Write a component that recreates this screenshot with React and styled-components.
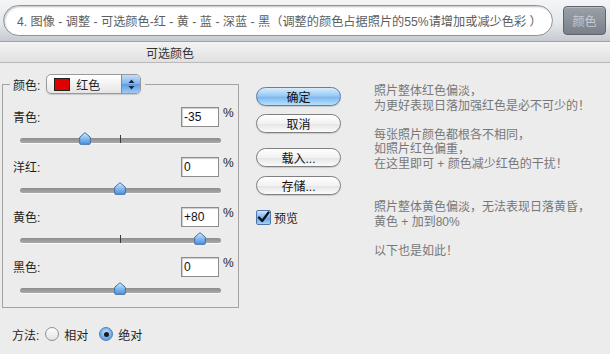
import React from "react";
import styled, { createGlobalStyle } from "styled-components";

const Global = createGlobalStyle`
  html, body { margin: 0; padding: 0; background: #ececec; }
  body { width: 610px; height: 354px; overflow: hidden; font-family: "Liberation Sans", "Noto Sans CJK SC", sans-serif; }
  * { box-sizing: border-box; }
`;

const Page = styled.div`
  width: 610px;
  height: 354px;
  background: #ececec;
  display: flex;
  flex-direction: column;
  color: #1e1e1e;
  font-size: 12px;
`;

const TopBar = styled.div`
  height: 42px;
  display: flex;
  align-items: center;
  padding: 0 4px 0 3px;
  gap: 10px;
  background: linear-gradient(#f4f5f7 0%, #e6e8ec 55%, #c6cad1 100%);
  border-bottom: 1px solid #9ea2a8;
`;

const Pill = styled.div`
  width: 550px;
  height: 31px;
  border-radius: 16px;
  background: #fff;
  border: 1px solid #8f949a;
  box-shadow: inset 1px 1px 2px rgba(0, 0, 0, 0.25);
  display: flex;
  align-items: center;
  padding-left: 13px;
  font-size: 12.2px;
  color: #5e5e5e;
  white-space: nowrap;
  overflow: hidden;
`;

const DarkButton = styled.div`
  width: 43px;
  height: 29px;
  border-radius: 4px;
  border: 1px solid #5f646b;
  background: linear-gradient(#9ba0a8, #7a8089);
  color: #c7cbd1;
  font-size: 12px;
  display: flex;
  align-items: center;
  justify-content: center;
  box-shadow: inset 0 1px 0 rgba(255, 255, 255, 0.3);
`;

const TitleBand = styled.div`
  height: 21px;
  display: flex;
  align-items: center;
  padding-left: 146px;
  background: linear-gradient(#f3f3f3, #e1e1e1);
  border-bottom: 1px solid #b9b9b9;
  font-size: 12px;
  color: #333;
`;

const Main = styled.div`
  display: flex;
  align-items: flex-start;
`;

const LeftCol = styled.div`
  width: 240px;
  padding-left: 2px;
  display: flex;
  flex-direction: column;
`;

const Fieldset = styled.fieldset`
  margin: 11px 0 0 0;
  padding: 0;
  width: 237px;
  border: 1px solid #a3a3a3;
  min-width: 0;
`;

const Legend = styled.legend`
  margin-left: 7px;
  padding: 0 4px 0 3px;
  display: flex;
  align-items: center;
  gap: 6px;
  height: 20px;
`;

const Label = styled.span`
  font-size: 12px;
  color: #1e1e1e;
`;

const Select = styled.div`
  width: 95px;
  height: 20px;
  border-radius: 5px;
  border: 1px solid #9a9a9a;
  background: linear-gradient(#ffffff, #f0f0f0 60%, #e4e4e4);
  display: flex;
  align-items: center;
  overflow: hidden;
  box-shadow: 0 1px 1px rgba(0, 0, 0, 0.15);
`;

const Swatch = styled.span`
  width: 16px;
  height: 13px;
  margin-left: 7px;
  background: #e00000;
  border: 1px solid #222;
`;

const SelectText = styled.span`
  margin-left: 6px;
  flex: 1;
  font-size: 12px;
`;

const Stepper = styled.span`
  width: 19px;
  height: 100%;
  background: linear-gradient(#c6def7, #7fb2ea 50%, #5c9be2 51%, #9fcaf4);
  border-left: 1px solid #6d8fb9;
  display: flex;
  align-items: center;
  justify-content: center;
`;

const Block = styled.div`
  display: flex;
  flex-direction: column;
  &:first-of-type { margin-top: 13px; }
`;

const Row = styled.div`
  height: 19px;
  display: flex;
  align-items: center;
  padding-left: 10px;
`;

const RowLabel = styled.span`
  flex: 1;
  font-size: 12px;
`;

const NumBox = styled.div`
  width: 38px;
  height: 20px;
  background: #fff;
  border: 1px solid #8c8c8c;
  box-shadow: inset 1px 1px 1px rgba(0, 0, 0, 0.2);
  font-size: 12px;
  padding-left: 2px;
  display: flex;
  align-items: center;
  color: #111;
`;

const Percent = styled.span`
  width: 19px;
  padding-left: 4px;
  font-size: 12px;
  align-self: flex-start;
  margin-top: -1px;
`;

const SliderWrap = styled.div`
  height: 31px;
  margin: 0 17px;
  position: relative;
`;

const Track = styled.div`
  position: absolute;
  left: 0;
  right: 0;
  top: 12px;
  height: 5px;
  border-radius: 3px;
  background: linear-gradient(#8d8d8d, #a9a9a9);
  box-shadow: 0 1px 0 rgba(255, 255, 255, 0.7);
`;

const Tick = styled.div`
  position: absolute;
  left: 100px;
  top: 9px;
  width: 1px;
  height: 8px;
  background: #3a3a3a;
`;

const ThumbSvg = styled.svg`
  position: absolute;
  top: 6px;
  margin-left: -6px;
`;

const MethodRow = styled.div`
  margin-top: 18px;
  padding-left: 10px;
  display: flex;
  align-items: center;
  height: 16px;
  font-size: 12px;
`;

const RadioWrap = styled.label`
  display: flex;
  align-items: center;
  margin-left: ${(p) => p.$ml}px;
  gap: 5px;
`;

const Radio = styled.span`
  width: 14px;
  height: 14px;
  border-radius: 50%;
  border: 1px solid ${(p) => (p.$on ? "#4d7fbf" : "#8e8e8e")};
  background: ${(p) =>
    p.$on
      ? "radial-gradient(circle at 50% 40%, #cfe6fb, #6fa9e8 60%, #4a8ad8)"
      : "linear-gradient(#fdfdfd, #e4e4e4)"};
  display: flex;
  align-items: center;
  justify-content: center;
  &::after {
    content: "";
    display: ${(p) => (p.$on ? "block" : "none")};
    width: 5px;
    height: 5px;
    border-radius: 50%;
    background: #1a1a1a;
  }
`;

const MidCol = styled.div`
  margin-left: 16px;
  padding-top: 24px;
  width: 85px;
  display: flex;
  flex-direction: column;
`;

const Capsule = styled.div`
  height: 19px;
  border-radius: 10px;
  border: 1px solid ${(p) => (p.$primary ? "#5b7fae" : "#7f7f7f")};
  background: ${(p) =>
    p.$primary
      ? "linear-gradient(#d7ecfd, #9acbf5 45%, #7fb8f0 55%, #b7e0fc)"
      : "linear-gradient(#ffffff, #f2f2f2 50%, #e6e6e6 55%, #fbfbfb)"};
  display: flex;
  align-items: center;
  justify-content: center;
  font-size: 12px;
  color: #111;
  margin-top: ${(p) => p.$mt}px;
  box-shadow: 0 1px 1px rgba(0, 0, 0, 0.15);
`;

const CheckRow = styled.div`
  margin-top: 14px;
  display: flex;
  align-items: center;
  gap: 3px;
  font-size: 12px;
`;

const CheckBox = styled.span`
  width: 15px;
  height: 15px;
  border: 1px solid #4e76a9;
  border-radius: 2px;
  background: linear-gradient(#cfe6fb, #79b1ee 50%, #5c9ce5 51%, #a6d2f6);
  display: flex;
  align-items: center;
  justify-content: center;
`;

const Notes = styled.div`
  margin-left: 33px;
  padding-top: 21px;
  font-size: 12px;
  line-height: 14.5px;
  color: #777;
  white-space: pre;
`;

function Thumb({ value }) {
  const left = 100 + value;
  return (
    <ThumbSvg width="12" height="13" viewBox="0 0 12 13" style={{ left: `${left}px` }}>
      <defs>
        <linearGradient id={`tg${value}`} x1="0" y1="0" x2="0" y2="1">
          <stop offset="0" stopColor="#d9ecfd" />
          <stop offset="0.5" stopColor="#86bcf1" />
          <stop offset="1" stopColor="#4d92e0" />
        </linearGradient>
      </defs>
      <path d="M6 0.7 L11.3 5.2 L11.3 11.3 Q11.3 12.3 10.3 12.3 L1.7 12.3 Q0.7 12.3 0.7 11.3 L0.7 5.2 Z" fill={`url(#tg${value})`} stroke="#3f6ea8" strokeWidth="1" />
    </ThumbSvg>
  );
}

const rows = [
  { label: "青色:", value: "-35", v: -35 },
  { label: "洋红:", value: "0", v: 0 },
  { label: "黄色:", value: "+80", v: 80 },
  { label: "黑色:", value: "0", v: 0 },
];

const notes = `照片整体红色偏淡，
为更好表现日落加强红色是必不可少的！

每张照片颜色都根各不相同，
如照片红色偏重，
在这里即可 + 颜色减少红色的干扰！


照片整体黄色偏淡，无法表现日落黄昏，
黄色 + 加到80%

以下也是如此！`;

export default function App() {
  return (
    <Page>
      <Global />
      <TopBar>
        <Pill>4. 图像 - 调整 - 可选颜色-红 - 黄 - 蓝 - 深蓝 - 黑（调整的颜色占据照片的55%请增加或减少色彩 ）</Pill>
        <DarkButton>颜色</DarkButton>
      </TopBar>
      <TitleBand>可选颜色</TitleBand>
      <Main>
        <LeftCol>
          <Fieldset>
            <Legend>
              <Label>颜色:</Label>
              <Select>
                <Swatch />
                <SelectText>红色</SelectText>
                <Stepper>
                  <svg width="7" height="11" viewBox="0 0 7 11">
                    <path d="M3.5 0.5 L6.5 4 L0.5 4 Z M3.5 10.5 L6.5 7 L0.5 7 Z" fill="#1b2a40" />
                  </svg>
                </Stepper>
              </Select>
            </Legend>
            {rows.map((r) => (
              <Block key={r.label}>
                <Row>
                  <RowLabel>{r.label}</RowLabel>
                  <NumBox>{r.value}</NumBox>
                  <Percent>%</Percent>
                </Row>
                <SliderWrap>
                  <Track />
                  {r.v !== 0 && <Tick />}
                  <Thumb value={r.v} />
                </SliderWrap>
              </Block>
            ))}
          </Fieldset>
          <MethodRow>
            <Label>方法:</Label>
            <RadioWrap $ml={6}>
              <Radio />
              <span>相对</span>
            </RadioWrap>
            <RadioWrap $ml={11}>
              <Radio $on />
              <span>绝对</span>
            </RadioWrap>
          </MethodRow>
        </LeftCol>
        <MidCol>
          <Capsule $primary $mt={0}>确定</Capsule>
          <Capsule $mt={8}>取消</Capsule>
          <Capsule $mt={15}>载入...</Capsule>
          <Capsule $mt={9}>存储...</Capsule>
          <CheckRow>
            <CheckBox>
              <svg width="13" height="13" viewBox="0 0 13 13">
                <path d="M2 6.5 L5.2 10 L11.5 1.5" fill="none" stroke="#111" strokeWidth="2.2" strokeLinecap="round" strokeLinejoin="round" />
              </svg>
            </CheckBox>
            <span>预览</span>
          </CheckRow>
        </MidCol>
        <Notes>{notes}</Notes>
      </Main>
    </Page>
  );
}
